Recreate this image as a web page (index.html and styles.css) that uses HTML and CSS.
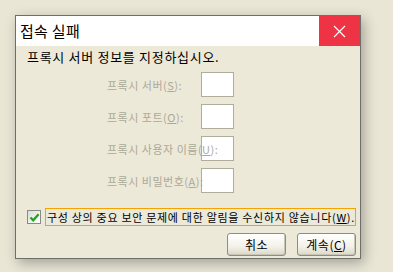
FILE: index.html
```html
<!DOCTYPE html>
<html>

<head>
    <title>접속 실패</title>
    <meta charset="UTF-8">
    <meta name="viewport" content="width=device-width, initial-scale=1.0">
    <link rel="stylesheet" href="styles.css">
</head>

<body>
    <div class="window">
        <div class="titlebar">
            <span class="title">접속 실패</span>
            <button class="close" type="button" aria-label="닫기">
                <svg width="13" height="13" viewBox="0 0 13 13">
                    <path d="M1 1 L12 12 M12 1 L1 12" stroke="#fff" stroke-width="1.2" fill="none" />
                </svg>
            </button>
        </div>
        <div class="content">
            <p class="intro">프록시 서버 정보를 지정하십시오.</p>
            <div class="fields">
                <div class="field">
                    <label for="server">프록시 서버(<u>S</u>):</label>
                    <input type="text" id="server" disabled>
                </div>
                <div class="field">
                    <label for="port">프록시 포트(<u>O</u>):</label>
                    <input type="text" id="port" disabled>
                </div>
                <div class="field">
                    <label for="user">프록시 사용자 이름(<u>U</u>):</label>
                    <input type="text" id="user" disabled>
                </div>
                <div class="field">
                    <label for="pass">프록시 비밀번호(<u>A</u>):</label>
                    <input type="password" id="pass" disabled>
                </div>
            </div>
            <div class="check-row">
                <span class="checkbox">
                    <svg width="11" height="11" viewBox="0 0 11 11">
                        <path d="M1.5 5.5 L4.2 8.3 L9.6 2.2" stroke="#21a121" stroke-width="2.2" fill="none" />
                    </svg>
                </span>
                <span class="check-label">구성 상의 중요 보안 문제에 대한 알림을 수신하지 않습니다(<u>W</u>).</span>
            </div>
            <div class="actions">
                <button type="button" class="btn">취소</button>
                <button type="button" class="btn">계속(<u>C</u>)</button>
            </div>
        </div>
    </div>
</body>

</html>
```

FILE: styles.css
```css
body {
    margin: 0;
    padding: 15px;
    background-color: #e9e6d6;
    font-family: "Noto Sans CJK KR", "DejaVu Sans", sans-serif;
}

.window {
    box-sizing: border-box;
    width: 346px;
    height: 244px;
    border: 1px solid #6e6e6a;
    background-color: #ece9d8;
    box-shadow: 3px 4px 12px rgba(0, 0, 0, 0.3);
    display: flex;
    flex-direction: column;
}

.titlebar {
    height: 30px;
    background-color: #fff;
    display: flex;
    justify-content: space-between;
    align-items: stretch;
}

.title {
    padding-left: 4px;
    font-size: 15px;
    line-height: 30px;
    letter-spacing: 0.3px;
    color: #000;
}

.close {
    width: 41px;
    border: none;
    padding: 0;
    background-color: #ee3344;
    display: flex;
    justify-content: center;
    align-items: center;
}

.content {
    padding: 3px 4px 0 11px;
    display: flex;
    flex-direction: column;
}

.intro {
    margin: 0;
    font-size: 13px;
    line-height: 16px;
    letter-spacing: 0.7px;
    color: #000;
}

.fields {
    margin-top: 7px;
    margin-left: 80px;
    display: flex;
    flex-direction: column;
    gap: 7px;
}

.field {
    display: grid;
    grid-template-columns: 94px 33px;
    height: 25px;
}

.field input {
    grid-column: 2;
    grid-row: 1;
    box-sizing: border-box;
    width: 33px;
    height: 25px;
    margin: 0;
    border: 1px solid #b1ad9c;
    background-color: #fff;
}

.field label {
    grid-column: 1;
    grid-row: 1;
    order: 2;
    align-self: center;
    white-space: nowrap;
    font-size: 11px;
    line-height: 14px;
    letter-spacing: 0.5px;
    color: #aca899;
}

.check-row {
    margin-top: 15px;
    display: flex;
    align-items: center;
    gap: 4px;
}

.checkbox {
    box-sizing: border-box;
    width: 14px;
    height: 14px;
    border: 1px solid #8a8a86;
    background: linear-gradient(135deg, #dcdcd6, #fff);
    display: flex;
    justify-content: center;
    align-items: center;
}

.check-label {
    box-sizing: border-box;
    width: 311px;
    height: 18px;
    border: 1px solid #f5a300;
    padding-left: 1px;
    font-size: 11px;
    line-height: 16px;
    letter-spacing: 0.7px;
    white-space: nowrap;
    color: #000;
}

.actions {
    margin-top: 7px;
    display: flex;
    justify-content: flex-end;
    gap: 11px;
}

.btn {
    box-sizing: border-box;
    width: 59px;
    height: 23px;
    padding: 0;
    border: 1px solid #8e8c84;
    border-radius: 3px;
    background: linear-gradient(#ffffff, #f3f1e8 60%, #dcd8c6);
    box-shadow: inset -1px -1px 0 #c9c6b6;
    font-family: "Noto Sans CJK KR", sans-serif;
    font-size: 12px;
    letter-spacing: 0.5px;
    color: #000;
}
```
